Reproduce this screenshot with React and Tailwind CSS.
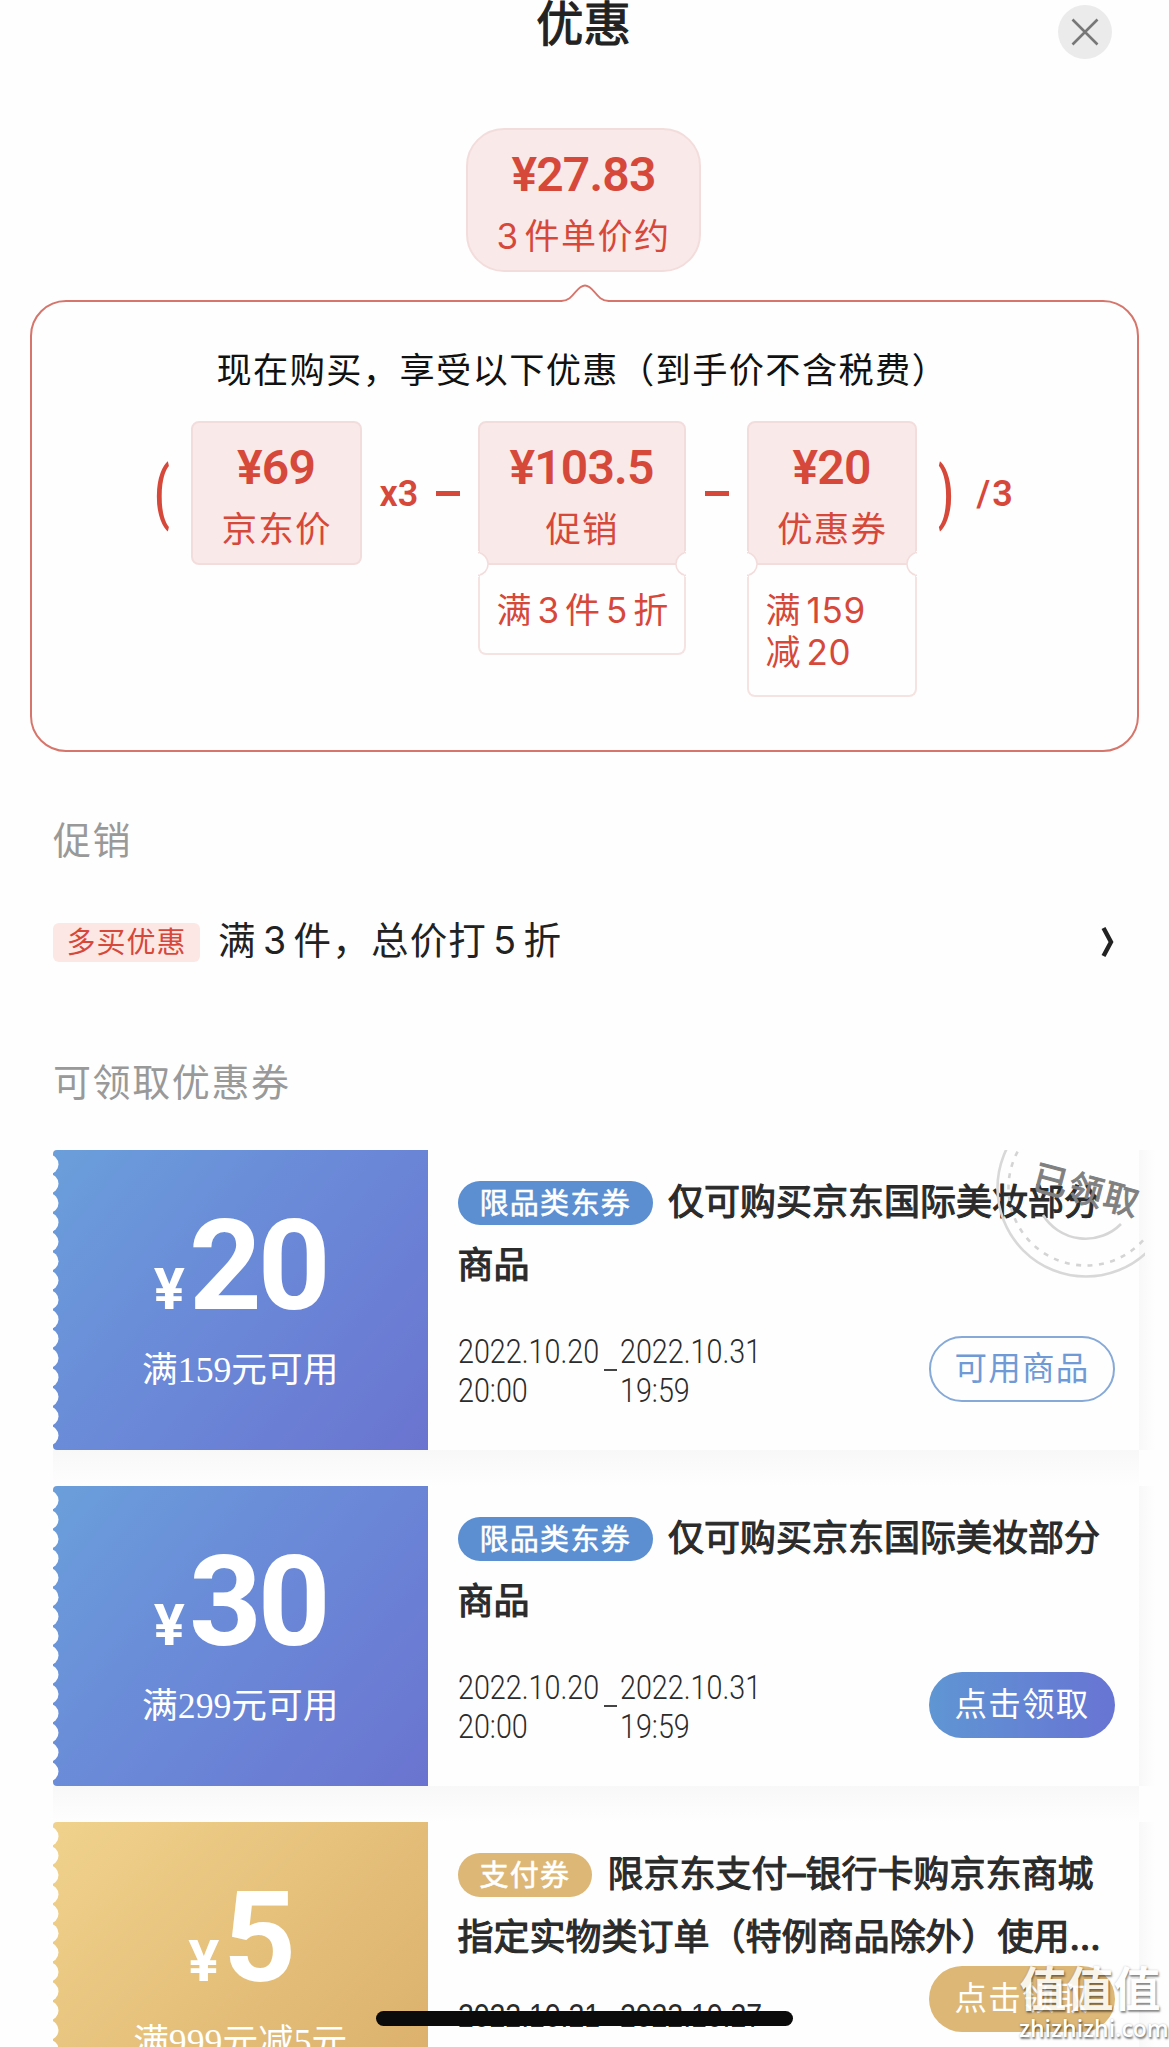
const CJK = "font-['Inter','Noto_Sans_CJK_SC',sans-serif]";

const NOTCHES = Array.from({ length: 15 }, (_, i) => 14.3 + i * 19.38);

function PriceBox({ price, label, note, width, noteHeight }) {
  return (
    <div className={`relative flex flex-col shrink-0 ${width}`}>
      <div className={`flex h-[144px] flex-col items-center border-2 border-[#f3dddc] bg-[#f9e9e9] ${note ? "rounded-t-lg" : "rounded-lg"}`}>
        <div className="mt-[19px] h-[52px] font-['Roboto'] text-[48px] leading-[52px] font-semibold tracking-[-0.8px]">{price}</div>
        <div className="mt-[9.5px] text-[35.5px] leading-[52px] tracking-[1.2px] -mr-[1.2px]">{label}</div>
      </div>
      {note && (
        <>
          <div className={`rounded-b-lg border-2 border-t-0 border-[#f5e3e2] ${noteHeight} pt-[24px] pl-[17px] text-[35px] leading-[42px] tracking-[0.8px] [word-spacing:-5.5px] whitespace-pre`}>
            {note}
          </div>
          <div className="absolute -left-3 top-[130px] h-[26px] w-[13px] bg-[#fefefe]" />
          <div className="absolute -right-3 top-[130px] h-[26px] w-[13px] bg-[#fefefe]" />
          <svg className="absolute left-0 top-[130px]" width="14" height="26" viewBox="0 0 14 26">
            <path d="M0 1.5A11.6 11.6 0 0 1 0 24.5Z" fill="#fefefe" stroke="#f3dddc" strokeWidth="1.6" />
            <path d="M0 2.5V23.5" stroke="#fefefe" strokeWidth="4" />
          </svg>
          <svg className="absolute right-0 top-[130px]" width="14" height="26" viewBox="0 0 14 26">
            <path d="M14 1.5A11.6 11.6 0 0 0 14 24.5Z" fill="#fefefe" stroke="#f3dddc" strokeWidth="1.6" />
            <path d="M14 2.5V23.5" stroke="#fefefe" strokeWidth="4" />
          </svg>
        </>
      )}
    </div>
  );
}

function Stamp() {
  return (
    <svg className="absolute top-0 right-[-6px]" width="155" height="132" viewBox="0 0 155 132">
      <g fill="none">
        <circle cx="96" cy="38" r="88.5" stroke="#d8d8d8" strokeWidth="2.6" />
        <circle cx="96" cy="38" r="77.5" stroke="#d4d4d4" strokeWidth="2.6" strokeDasharray="5 6.5" />
        <path d="M53 65A50 50 0 0 0 131 74" stroke="#d6d6d6" strokeWidth="2.6" />
      </g>
      <text
        transform="translate(97.5 37.5) rotate(15)"
        textAnchor="middle"
        dominantBaseline="central"
        fill="#808080"
        stroke="#808080"
        strokeWidth="1"
        fontSize="35"
        letterSpacing="1.5"
        fontFamily="Noto Sans CJK SC, sans-serif"
      >
        已领取
      </text>
    </svg>
  );
}

function Coupon({ amount, condition, tag, title, start, end, action, tone, claimed }) {
  const gold = tone === "gold";
  const dateClass = gold
    ? "w-max origin-left scale-x-[0.86] font-['Liberation_Sans'] text-[33px]"
    : "w-max origin-left scale-x-[0.845]";
  return (
    <div className="grid h-[336px] grid-cols-[1086px_16px] grid-rows-[300px_36px]">
      <div className="relative flex bg-[#fefefe]">
        <div
          className={`relative flex w-[374.5px] shrink-0 flex-col items-center overflow-hidden rounded-l-[4px] text-white ${
            gold ? "bg-[linear-gradient(135deg,#f0d28c,#d9ad69)]" : "bg-[linear-gradient(130deg,#6a9fdb,#6a8ad8_45%,#6a74d0)]"
          }`}
        >
          <svg className="absolute left-0 top-0" width="8" height="300" viewBox="0 0 8 300">
            {NOTCHES.map((y) => (
              <circle key={y} cx="-4.2" cy={y} r="9.7" fill="#fefefe" />
            ))}
          </svg>
          <div className="mt-[46px] flex h-[140px] items-baseline font-['Roboto'] font-bold leading-[140px]">
            <span className="mr-1 text-[58px]">¥</span>
            <span className="text-[127px] tracking-[-4px]">{amount}</span>
          </div>
          <div className="mt-[8px] font-['Liberation_Serif','Noto_Sans_CJK_SC',serif] text-[35.7px] leading-[52px] whitespace-nowrap">
            {condition}
          </div>
        </div>
        <div className="flex min-w-0 flex-1 flex-col pl-[30px]">
          <div className="mt-[21.5px] h-[126px] text-[36px] leading-[63px] font-normal whitespace-nowrap text-[#2b2b2b] [-webkit-text-stroke:1.1px_#2b2b2b]">
            <span
              className={`mr-[15px] inline-flex h-[44px] items-center rounded-full px-[22px] align-middle -mt-1 text-[29px] tracking-[1.3px] text-white [-webkit-text-stroke:0.6px_white] ${
                gold ? "bg-[#ddb776]" : "bg-[#5b8fd2]"
              }`}
            >
              {tag}
            </span>
            {title[0]}
            <br />
            {title[1]}
          </div>
          <div className={`flex justify-between pr-6 ${gold ? "-mt-[3px]" : "mt-[39px]"}`}>
            <div className={`flex w-[304px] font-['Roboto'] text-[34px] leading-[39px] font-[350] whitespace-pre text-[#2b2b2b] ${gold ? "pt-[30px]" : "-mt-[4px]"}`}>
              <div className="w-[146px] shrink-0"><div className={dateClass}>{start}</div></div>
              <div className={`mr-[3px] h-[2px] w-[13px] shrink-0 bg-[#444] ${gold ? "mt-[20px]" : "mt-[37px]"}`} />
              <div className="shrink-0"><div className={dateClass}>{end}</div></div>
            </div>
            <div
              className={`flex h-[66px] w-[186px] shrink-0 items-center justify-center rounded-full pt-[1px] text-[32.5px] tracking-[1.2px] ${
                claimed
                  ? "border-2 border-[#86a9d8] text-[#6f9ad6]"
                  : gold
                    ? "bg-[#ddb776] text-white"
                    : "bg-[linear-gradient(90deg,#5f96d3,#6874d3)] text-white"
              }`}
            >
              {action}
            </div>
          </div>
        </div>
        {claimed && <Stamp />}
      </div>
      <div className="bg-gradient-to-r from-[#f8f8f8] to-[#fefefe]" />
      <div className="bg-gradient-to-b from-[#f8f8f8] to-[#fefefe]" />
    </div>
  );
}

export default function App() {
  return (
    <div className={`relative h-[2047px] w-[1169px] overflow-hidden bg-[#fefefe] ${CJK}`}>
      <header className="relative h-[128px]">
        <h1 className="absolute top-0 left-0 w-[1167px] text-center text-[47.5px] leading-[48px] font-normal text-[#222] [-webkit-text-stroke:1.1px_#222]">优惠</h1>
        <button className="absolute top-[5px] left-[1058px] flex size-[54px] items-center justify-center rounded-full bg-[#ebebeb]">
          <svg width="28" height="28" viewBox="0 0 28 28">
            <path d="M1.5 1.5L26.5 26.5M26.5 1.5L1.5 26.5" stroke="#777" strokeWidth="2.6" />
          </svg>
        </button>
      </header>

      <div className="ml-[466px] flex h-[144px] w-[235px] flex-col items-center rounded-[38px] border-2 border-[#f3dddc] bg-[#f9e9e9] text-[#d6483a]">
        <div className="mt-[19px] font-['Roboto'] text-[48px] leading-[52px] font-semibold tracking-[-0.8px]">¥27.83</div>
        <div className="mt-[8.5px] text-[35px] leading-[52px] tracking-[1.5px] [word-spacing:-6.5px]">3 件单价约</div>
      </div>

      <section className="relative mt-[28px] ml-[29.5px] h-[452px] w-[1109.5px] rounded-[36px] border-2 border-[#d6756b] text-[#d6483a]">
        <svg className="absolute -top-[18px] left-[529px]" width="48" height="20" viewBox="0 0 48 20">
          <path d="M1 17.2C13 17.2 15 1.5 24 1.5S35 17.2 47 17.2V20H1Z" fill="#fefefe" />
          <path d="M0 17C13 17 15 1.5 24 1.5S35 17 48 17" fill="none" stroke="#d6756b" strokeWidth="1.8" />
        </svg>
        <p className="mt-[42px] ml-[185px] text-[35.2px] leading-[52px] tracking-[1.4px] whitespace-nowrap text-[#111]">
          现在购买，享受以下优惠（到手价不含税费）
        </p>
        <div className="mt-[25px] flex items-start">
          <div className="ml-[122px] mt-[32px] flex h-[80px] w-[37px] items-center font-['Roboto'] text-[69px] font-medium"><span className="origin-left scale-x-[0.66]">(</span></div>
          <PriceBox price="¥69" label="京东价" width="w-[171px]" />
          <div className="mt-[52px] ml-[18px] w-[56px] font-['Roboto'] text-[36px] leading-[42px] font-semibold">x3</div>
          <div className="mt-[70px] h-[4.5px] w-[24px] bg-[#d6483a]" />
          <PriceBox price="¥103.5" label="促销" note="满 3 件 5 折" width="ml-[18px] w-[208px]" noteHeight="h-[90px]" />
          <div className="mt-[70px] ml-[19px] h-[4.5px] w-[24px] bg-[#d6483a]" />
          <PriceBox price="¥20" label="优惠券" note={"满 159\n减 20"} width="ml-[18px] w-[170px]" noteHeight="h-[132px]" />
          <div className="ml-[21px] mt-[32px] flex h-[80px] w-[39px] items-center font-['Roboto'] text-[69px] font-medium"><span className="origin-left scale-x-[0.66]">)</span></div>
          <div className="mt-[52px] font-['Roboto'] text-[36px] leading-[42px] font-semibold tracking-[2px]">/3</div>
        </div>
      </section>

      <h2 className="mt-[60px] ml-[53px] text-[38px] leading-[56px] tracking-[1.6px] text-[#999]">促销</h2>
      <div className="mt-[45px] ml-[53px] flex h-[56px] items-center">
        <span className="mt-[3px] flex h-[39px] w-[147px] items-center justify-center rounded-md bg-[#fce7e5] pt-[1px] text-[29px] tracking-[1px] text-[#d6483a]">多买优惠</span>
        <span className="ml-[18px] text-[37.5px] leading-[56px] tracking-[1.2px] [word-spacing:-5.5px] whitespace-pre text-[#222]">满 3 件，总价打 5 折</span>
        <svg className="ml-auto mr-[55px] mt-[1px]" width="13" height="32" viewBox="0 0 13 32">
          <path d="M2.5 2L10 16L2.5 30" fill="none" stroke="#222" strokeWidth="4.4" />
        </svg>
      </div>
      <h2 className="mt-[85px] ml-[53px] text-[38px] leading-[56px] tracking-[1.6px] text-[#999]">可领取优惠券</h2>

      <div className="mt-[39.5px] ml-[53px]">
        <Coupon
          amount="20"
          condition="满159元可用"
          tag="限品类东券"
          title={["仅可购买京东国际美妆部分", "商品"]}
          start={"2022.10.20\n20:00"}
          end={"2022.10.31\n19:59"}
          action="可用商品"
          claimed
        />
        <Coupon
          amount="30"
          condition="满299元可用"
          tag="限品类东券"
          title={["仅可购买京东国际美妆部分", "商品"]}
          start={"2022.10.20\n20:00"}
          end={"2022.10.31\n19:59"}
          action="点击领取"
        />
        <Coupon
          tone="gold"
          amount="5"
          condition="满999元减5元"
          tag="支付券"
          title={["限京东支付–银行卡购京东商城", "指定实物类订单（特例商品除外）使用…"]}
          start="2022.10.21"
          end="2022.10.27"
          action="点击领取"
        />
      </div>

      <div className="absolute top-[2011px] left-[376px] h-[15px] w-[417px] rounded-full bg-[#0b0b0b]" />
      <div className="absolute top-[1959px] left-[1019px] w-[142px] text-center text-white [text-shadow:1px_2px_2px_rgba(0,0,0,0.5),0_0_2px_rgba(0,0,0,0.25)]">
        <div className="text-[47px] leading-[60px] font-bold opacity-85">值值值</div>
        <div className="-mt-[5px] font-['Open_Sans'] text-[23px] leading-[28px] font-semibold">zhizhizhi.com</div>
      </div>
    </div>
  );
}
